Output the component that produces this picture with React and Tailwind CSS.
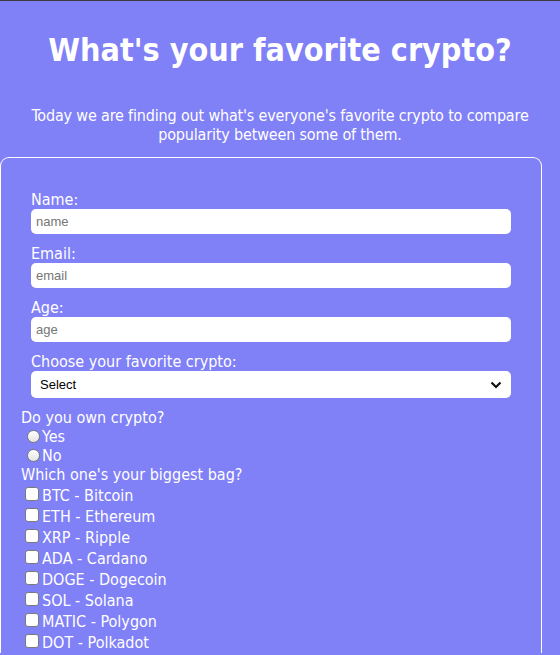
import React from "react";

const font = { fontFamily: '"DejaVu Sans Condensed", "DejaVu Sans", sans-serif' };

function Radio({ label }) {
  return (
    <label className="flex items-center h-[19px] pl-[6px]">
      <span className="w-[13px] h-[13px] rounded-full border border-[#7a7a7a] bg-gradient-to-b from-white to-[#e4e4e4] mr-[2px] shrink-0" />
      <span>{label}</span>
    </label>
  );
}

function Check({ label }) {
  return (
    <label className="flex items-center h-[21px] pl-[4px]">
      <span className="w-[14px] h-[14px] rounded-[3px] border border-[#7a7a7a] bg-white mr-[3px] shrink-0 -mt-[3px]" />
      <span>{label}</span>
    </label>
  );
}

function Field({ label, placeholder }) {
  return (
    <div className="mb-[10px]">
      <div className="h-[19px] leading-[19px]">{label}</div>
      <div className="w-[480px] h-[25px] bg-white rounded-[5px] flex items-center pl-[5px] text-[13px] text-[#757575]" style={{ fontFamily: '"Liberation Sans", Arial, sans-serif' }}>
        {placeholder}
      </div>
    </div>
  );
}

const coins = [
  "BTC - Bitcoin",
  "ETH - Ethereum",
  "XRP - Ripple",
  "ADA - Cardano",
  "DOGE - Dogecoin",
  "SOL - Solana",
  "MATIC - Polygon",
  "DOT - Polkadot",
];

export default function App() {
  return (
    <div className="w-[560px] h-[655px] overflow-hidden bg-[#8080f7] border-t border-[#3c3c3c] text-white text-[16px]" style={font}>
      <h1 className="text-center font-bold text-[32px] leading-[38px] pt-[30px]">What's your favorite crypto?</h1>
      <p className="text-center leading-[19px] mt-[37px] px-[10px] tracking-[-0.17px]">
        Today we are finding out what's everyone's favorite crypto to compare popularity between some of them.
      </p>
      <div className="mt-[13px] w-[542px] border border-white border-b-0 rounded-t-[9px] pt-[32px]">
        <div className="pl-[30px]">
          <Field label="Name:" placeholder="name" />
          <Field label="Email:" placeholder="email" />
          <Field label="Age:" placeholder="age" />
          <div>
            <div className="h-[19px] leading-[19px]">Choose your favorite crypto:</div>
            <div className="w-[480px] h-[27px] bg-white rounded-[5px] flex items-center justify-between pl-[9px] pr-[9px] text-[13px] text-black" style={{ fontFamily: '"Liberation Sans", Arial, sans-serif' }}>
              <span>Select</span>
              <svg width="12" height="8" viewBox="0 0 12 8"><path d="M1.5 1.5 L6 6 L10.5 1.5" fill="none" stroke="#111" strokeWidth="2.2" /></svg>
            </div>
          </div>
        </div>
        <div className="pl-[20px] mt-[10px]">
          <div className="h-[19px] leading-[19px]">Do you own crypto?</div>
          <Radio label="Yes" />
          <Radio label="No" />
          <div className="h-[19px] leading-[19px]">Which one's your biggest bag?</div>
          <div className="mt-[1px]">
            {coins.map((c) => (
              <Check key={c} label={c} />
            ))}
          </div>
        </div>
      </div>
    </div>
  );
}
